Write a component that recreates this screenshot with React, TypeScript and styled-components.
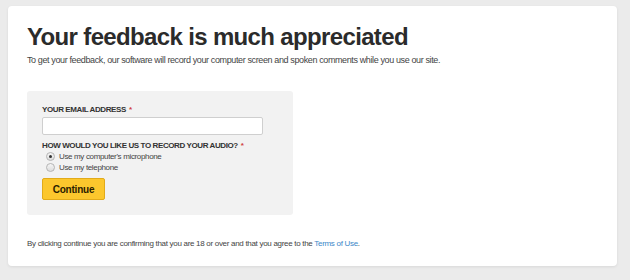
import React, { useState } from "react";
import styled, { createGlobalStyle } from "styled-components";

const GlobalStyle = createGlobalStyle`
  html, body {
    margin: 0;
    padding: 0;
    background-color: #ebebeb;
    font-family: "Liberation Sans", Arial, sans-serif;
  }
`;

const Page = styled.div`
  padding: 6px 13px 14px 8px;
  height: 280px;
  box-sizing: border-box;
`;

const Card = styled.div`
  background-color: #fff;
  border-radius: 4px;
  box-shadow: 0 1px 3px rgba(0, 0, 0, 0.08);
  height: 100%;
  box-sizing: border-box;
  padding: 16px 19px 0;
  display: flex;
  flex-direction: column;
`;

const Title = styled.h1`
  margin: 0;
  font-size: 24px;
  line-height: 30px;
  letter-spacing: -0.65px;
  font-weight: bold;
  color: #2b2b2b;
`;

const Intro = styled.p`
  margin: 2px 0 0;
  font-size: 9px;
  line-height: 12px;
  letter-spacing: -0.38px;
  color: #444;
`;

const FormBox = styled.div`
  margin-top: 25px;
  width: 266px;
  height: 124px;
  box-sizing: border-box;
  background-color: #f2f2f2;
  border-radius: 3px;
  padding: 14px 15px;
  display: flex;
  flex-direction: column;
  align-items: flex-start;
`;

const Label = styled.label<{ $gap?: number }>`
  display: block;
  margin-top: ${(p) => p.$gap ?? 0}px;
  font-size: 8px;
  line-height: 10px;
  letter-spacing: -0.4px;
  font-weight: bold;
  color: #333;
  text-transform: uppercase;
`;

const Required = styled.span`
  color: #d04040;
  margin-left: 3px;
`;

const Input = styled.input`
  margin-top: 2px;
  width: 221px;
  height: 18px;
  box-sizing: border-box;
  border: 1px solid #cfcfcf;
  border-radius: 2px;
  background-color: #fff;
  outline: none;
`;

const RadioList = styled.div`
  display: flex;
  flex-direction: column;
`;

const RadioRow = styled.label`
  display: flex;
  align-items: center;
  height: 11px;
  margin-left: 4px;
  font-size: 8px;
  letter-spacing: -0.35px;
  color: #444;
`;

const Radio = styled.input`
  appearance: none;
  margin: 0 4px 0 0;
  width: 9px;
  height: 9px;
  border-radius: 50%;
  border: 1px solid #b4b4b4;
  background: linear-gradient(#f6f6f6, #dcdcdc);
  box-sizing: border-box;
  display: grid;
  place-items: center;

  &:checked::after {
    content: "";
    width: 3px;
    height: 3px;
    border-radius: 50%;
    background-color: #333;
  }
`;

const Button = styled.button`
  margin-top: 5px;
  width: 63px;
  height: 22px;
  background-color: #fcc72d;
  border: 1px solid #e2ab1a;
  border-radius: 2px;
  font-family: "Liberation Sans", Arial, sans-serif;
  font-size: 10px;
  letter-spacing: -0.2px;
  font-weight: bold;
  color: #2a2000;
  padding: 0;
  cursor: pointer;
`;

const Footer = styled.p`
  margin: 24px 0 0;
  font-size: 8px;
  line-height: 10px;
  letter-spacing: -0.3px;
  color: #444;
`;

const TermsLink = styled.a`
  color: #3b87c8;
  text-decoration: none;
`;

const App: React.FC = () => {
  const [audio, setAudio] = useState("mic");

  return (
    <>
      <GlobalStyle />
      <Page>
        <Card>
          <Title>Your feedback is much appreciated</Title>
          <Intro>
            To get your feedback, our software will record your computer screen and spoken comments while you use our site.
          </Intro>
          <FormBox>
            <Label>
              Your email address<Required>*</Required>
            </Label>
            <Input type="email" />
            <Label $gap={6}>
              How would you like us to record your audio?<Required>*</Required>
            </Label>
            <RadioList>
              <RadioRow>
                <Radio
                  type="radio"
                  name="audio"
                  checked={audio === "mic"}
                  onChange={() => setAudio("mic")}
                />
                Use my computer's microphone
              </RadioRow>
              <RadioRow>
                <Radio
                  type="radio"
                  name="audio"
                  checked={audio === "phone"}
                  onChange={() => setAudio("phone")}
                />
                Use my telephone
              </RadioRow>
            </RadioList>
            <Button>Continue</Button>
          </FormBox>
          <Footer>
            By clicking continue you are confirming that you are 18 or over and that you agree to the{" "}
            <TermsLink href="#">Terms of Use</TermsLink>.
          </Footer>
        </Card>
      </Page>
    </>
  );
};

export default App;
